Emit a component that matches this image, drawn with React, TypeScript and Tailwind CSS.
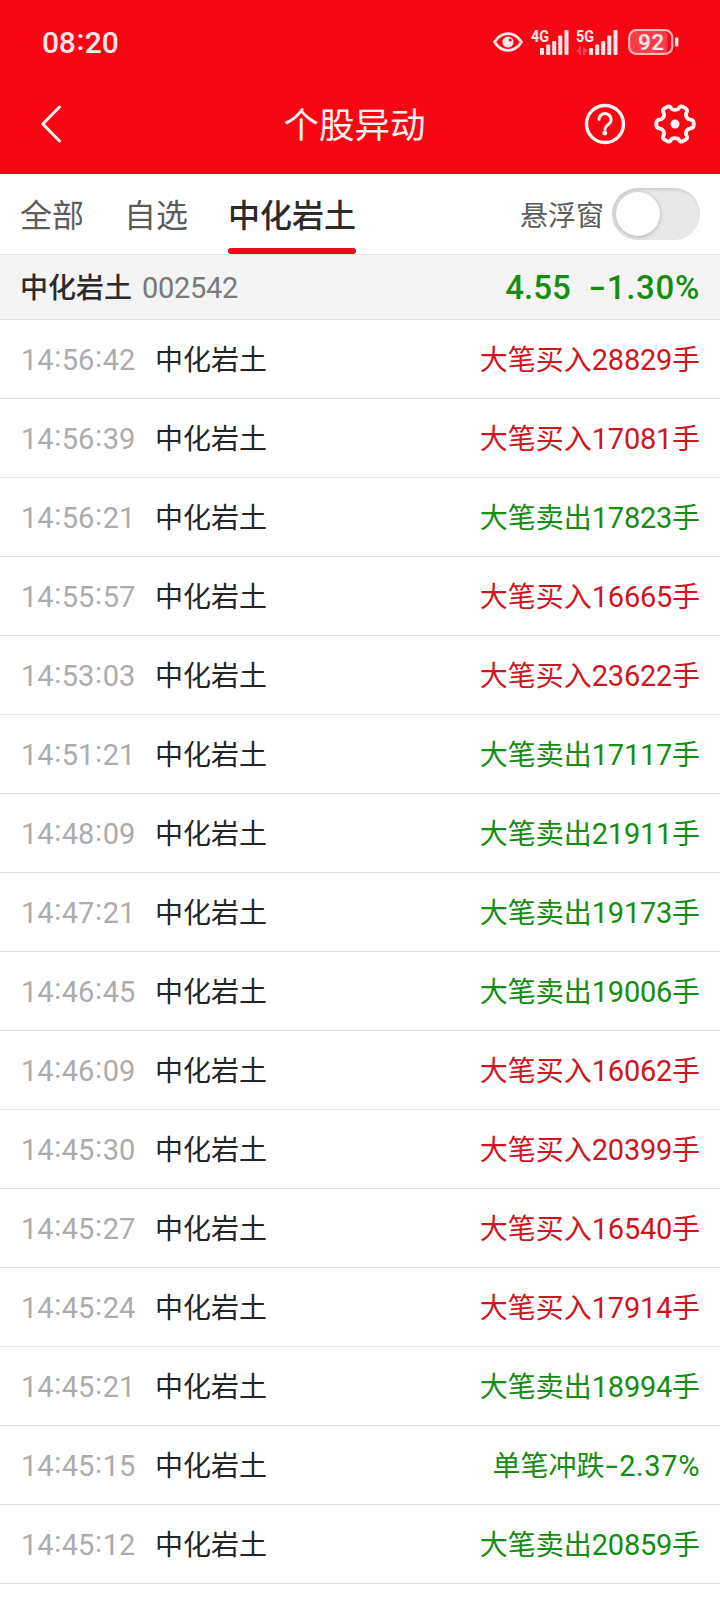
import React, { useState } from 'react';

type Side = 'up' | 'down';

interface Alert {
  time: string;
  label: string;
  value: string;
  unit?: string;
  side: Side;
}

const STOCK = { name: '中化岩土', code: '002542', price: '4.55', change: '-1.30%' };

const TABS = ['全部', '自选', '中化岩土'];

const ALERTS: Alert[] = [
  { time: '14:56:42', label: '大笔买入', value: '28829', unit: '手', side: 'up' },
  { time: '14:56:39', label: '大笔买入', value: '17081', unit: '手', side: 'up' },
  { time: '14:56:21', label: '大笔卖出', value: '17823', unit: '手', side: 'down' },
  { time: '14:55:57', label: '大笔买入', value: '16665', unit: '手', side: 'up' },
  { time: '14:53:03', label: '大笔买入', value: '23622', unit: '手', side: 'up' },
  { time: '14:51:21', label: '大笔卖出', value: '17117', unit: '手', side: 'down' },
  { time: '14:48:09', label: '大笔卖出', value: '21911', unit: '手', side: 'down' },
  { time: '14:47:21', label: '大笔卖出', value: '19173', unit: '手', side: 'down' },
  { time: '14:46:45', label: '大笔卖出', value: '19006', unit: '手', side: 'down' },
  { time: '14:46:09', label: '大笔买入', value: '16062', unit: '手', side: 'up' },
  { time: '14:45:30', label: '大笔买入', value: '20399', unit: '手', side: 'up' },
  { time: '14:45:27', label: '大笔买入', value: '16540', unit: '手', side: 'up' },
  { time: '14:45:24', label: '大笔买入', value: '17914', unit: '手', side: 'up' },
  { time: '14:45:21', label: '大笔卖出', value: '18994', unit: '手', side: 'down' },
  { time: '14:45:15', label: '单笔冲跌', value: '-2.37%', side: 'down' },
  { time: '14:45:12', label: '大笔卖出', value: '20859', unit: '手', side: 'down' },
];

// Roboto sets its colon low and its hyphen short, both are adjusted here
const Digits: React.FC<{ text: string; className?: string }> = ({ text, className = '' }) => (
  <span className={`font-[Roboto,sans-serif] leading-none whitespace-nowrap ${className}`}>
    {text.split('').map((ch, i) => {
      if (ch === ':') return <span key={i} className="inline-block px-[0.7px] align-[3px]">:</span>;
      if (ch === '-') return <span key={i} className="inline-block scale-x-150 px-[3px]">-</span>;
      return ch;
    })}
  </span>
);

const SignalBars: React.FC = () => (
  <>
    <rect x="0" y="19" width="4" height="7" rx="1" />
    <rect x="6.2" y="15.5" width="4" height="10.5" rx="1" />
    <rect x="12.2" y="12" width="4" height="14" rx="1" />
    <rect x="18.3" y="6.5" width="4" height="19.5" rx="1" />
    <rect x="24.5" y="1" width="4" height="25" rx="1" />
  </>
);

const StatusBar: React.FC = () => (
  <div className="flex h-[84px] items-center justify-between pl-[42px] pr-[41px]">
    <Digits text="08:20" className="pb-px text-[30px] font-medium tracking-[-0.2px] text-[#ffe6e8]" />
    <div className="flex items-center text-[#ffe6e8]">
      <svg width="30" height="20" viewBox="0 0 30 20" fill="none" className="mr-[8px]">
        <path d="M1.5 10C5 4.6 9.7 1.6 15 1.6S25 4.6 28.5 10C25 15.4 20.3 18.4 15 18.4S5 15.4 1.5 10Z" stroke="currentColor" strokeWidth="2.8" strokeLinejoin="round" />
        <circle cx="15" cy="10" r="5.6" fill="currentColor" />
        <circle cx="17.2" cy="8" r="1.5" fill="#f90615" />
      </svg>
      <div className="mr-[7px] flex h-[27px] w-[38px] items-start">
        <svg width="38" height="27" viewBox="0 0 38 27" fill="currentColor" className="overflow-visible">
          <text x="0" y="13.2" textLength="18" lengthAdjust="spacingAndGlyphs" className="font-[Roboto,sans-serif] text-[17px] font-bold">4G</text>
          <g transform="translate(9 0)"><SignalBars /></g>
        </svg>
      </div>
      <div className="mr-[9px] flex h-[27px] w-[43px] items-start">
        <svg width="43" height="27" viewBox="0 0 43 27" fill="currentColor" className="overflow-visible">
          <text x="0" y="13.2" textLength="18" lengthAdjust="spacingAndGlyphs" className="font-[Roboto,sans-serif] text-[17px] font-bold">5G</text>
          <path d="M5 17.5V26H3V23H0L4 17.5Z M7 17.5L12 22L9 23V26H7Z" opacity="0.3" />
          <g transform="translate(13 0)"><SignalBars /></g>
        </svg>
      </div>
      <svg width="51" height="26" viewBox="0 0 51 26" fill="none">
        <rect x="2.5" y="2.5" width="37" height="21" rx="4" fill="#ffffff" opacity="0.22" />
        <rect x="1.2" y="1.2" width="43" height="23.6" rx="7" stroke="currentColor" strokeWidth="2.2" opacity="0.8" />
        <rect x="47" y="8.5" width="3.4" height="9" rx="1.2" fill="currentColor" />
        <text x="10" y="20.8" textLength="26" fill="currentColor" className="font-[Roboto,sans-serif] text-[22.5px] font-semibold">92</text>
      </svg>
    </div>
  </div>
);

const Header: React.FC = () => (
  <header className="flex h-[90px] items-center justify-between pl-[41px] pr-[24px] pb-[10px] text-[#fff3f3]">
    <svg width="84" height="38" viewBox="0 0 84 38" fill="none" stroke="currentColor" strokeWidth="3" strokeLinecap="round" strokeLinejoin="round">
      <path d="M18.5 2L1.8 19L18.5 36" />
    </svg>
    <h1 className="pb-[2px] text-[35.5px] leading-none">个股异动</h1>
    <div className="flex items-center gap-[28px]">
      <svg width="42" height="42" viewBox="0 0 42 42" fill="none" stroke="currentColor" strokeWidth="3.4">
        <circle cx="21" cy="21" r="18.5" />
        <path d="M15 16.5a6 6 0 1 1 9.8 4.6c-2.4 2-3.8 3-3.8 5.4" strokeWidth="3" strokeLinecap="round" />
        <circle cx="20.8" cy="30.2" r="2.4" fill="currentColor" stroke="none" />
      </svg>
      <svg width="42" height="42" viewBox="0 0 42 42" fill="none" stroke="currentColor" strokeWidth="3.8" strokeLinejoin="round">
        <path d="M13.5 3.6Q16 2.8 17.2 5.4Q18 6.8 21 6.8T24.8 5.4Q26 2.8 28.5 3.6L32 5.7Q34 7.3 32.4 9.8Q31.2 12 32.8 14.4Q34 16.3 36.6 16.6Q39.8 17 39.8 21T36.6 25.4Q34 25.7 32.8 27.6Q31.2 30 32.4 32.2Q34 34.7 32 36.3L28.5 38.4Q26 39.2 24.8 36.6Q24 35.2 21 35.2T17.2 36.6Q16 39.2 13.5 38.4L10 36.3Q8 34.7 9.6 32.2Q10.8 30 9.2 27.6Q8 25.7 5.4 25.4Q2.2 25 2.2 21T5.4 16.6Q8 16.3 9.2 14.4Q10.8 12 9.6 9.8Q8 7.3 10 5.7Z" />
        <circle cx="21" cy="21" r="4.5" fill="currentColor" stroke="none" />
      </svg>
    </div>
  </header>
);

const App: React.FC = () => {
  const [activeTab, setActiveTab] = useState('中化岩土');
  const [floating, setFloating] = useState(false);

  return (
    <div className="min-h-[1610px] w-[720px] bg-white font-['Noto_Sans_CJK_SC',sans-serif]">
      <div className="bg-[#f90615]">
        <StatusBar />
        <Header />
      </div>

      {/* Tabs */}
      <div className="flex h-[81px] items-stretch justify-between border-b border-[#e2e2e2] px-5">
        <nav className="flex gap-10">
          {TABS.map((tab) => (
            <button
              key={tab}
              onClick={() => setActiveTab(tab)}
              className={`flex flex-col justify-between pt-[23px] text-[32px] leading-none ${
                activeTab === tab ? 'font-medium text-[#2b2b2b]' : 'text-[#5c5c5c]'
              }`}
            >
              {tab}
              <span className={`h-[6px] w-full rounded-full ${activeTab === tab ? 'bg-[#ef0a18]' : ''}`} />
            </button>
          ))}
        </nav>
        <div className="flex items-center gap-2">
          <span className="pb-px text-[28px] leading-none text-[#5c5c5c]">悬浮窗</span>
          <button
            onClick={() => setFloating(!floating)}
            className={`flex h-[52px] w-[88px] items-center rounded-full bg-[#e8e8e8] px-1 shadow-[inset_1px_2px_3px_rgba(0,0,0,0.12)] ${floating ? 'justify-end' : ''}`}
          >
            <span className="h-11 w-11 rounded-full bg-white shadow-[0_1px_4px_rgba(0,0,0,0.25)]" />
          </button>
        </div>
      </div>

      {/* Quote */}
      <div className="flex h-[65px] items-center justify-between border-b border-[#e2e2e2] bg-[#f4f4f4] px-5">
        <div className="flex items-center">
          <span className="pb-[2px] text-[28px] leading-none font-medium text-[#2b2b2b]">{STOCK.name}</span>
          <Digits text={STOCK.code} className="ml-[10px] pt-[2px] text-[29px] tracking-[-0.3px] text-[#7a7a7a]" />
        </div>
        <div className="flex items-center gap-[18px] text-[#158c12]">
          <Digits text={STOCK.price} className="text-[33px] font-medium" />
          <Digits text={STOCK.change} className="text-[33px] font-medium tracking-[0.7px]" />
        </div>
      </div>

      {/* Alerts */}
      <ul>
        {ALERTS.map((alert) => (
          <li key={alert.time} className="flex h-[79px] items-center border-b border-[#e2e2e2] px-5">
            <Digits text={alert.time} className="w-[135px] pl-px text-[29px] tracking-[-0.05px] text-[#acacac]" />
            <span className="pb-[2px] text-[28px] leading-none text-[#252525]">{STOCK.name}</span>
            <span className={`ml-auto flex items-center text-[28px] leading-none ${alert.side === 'up' ? 'text-[#cf1620]' : 'text-[#158c12]'}`}>
              <span className="pb-[2px]">{alert.label}</span>
              <Digits
                text={alert.value}
                className={`pt-[2px] text-[29px] ${alert.unit ? 'tracking-[-0.28px]' : 'tracking-[0.6px]'}`}
              />
              {alert.unit && <span className="pb-[2px]">{alert.unit}</span>}
            </span>
          </li>
        ))}
      </ul>
    </div>
  );
};

export default App;
